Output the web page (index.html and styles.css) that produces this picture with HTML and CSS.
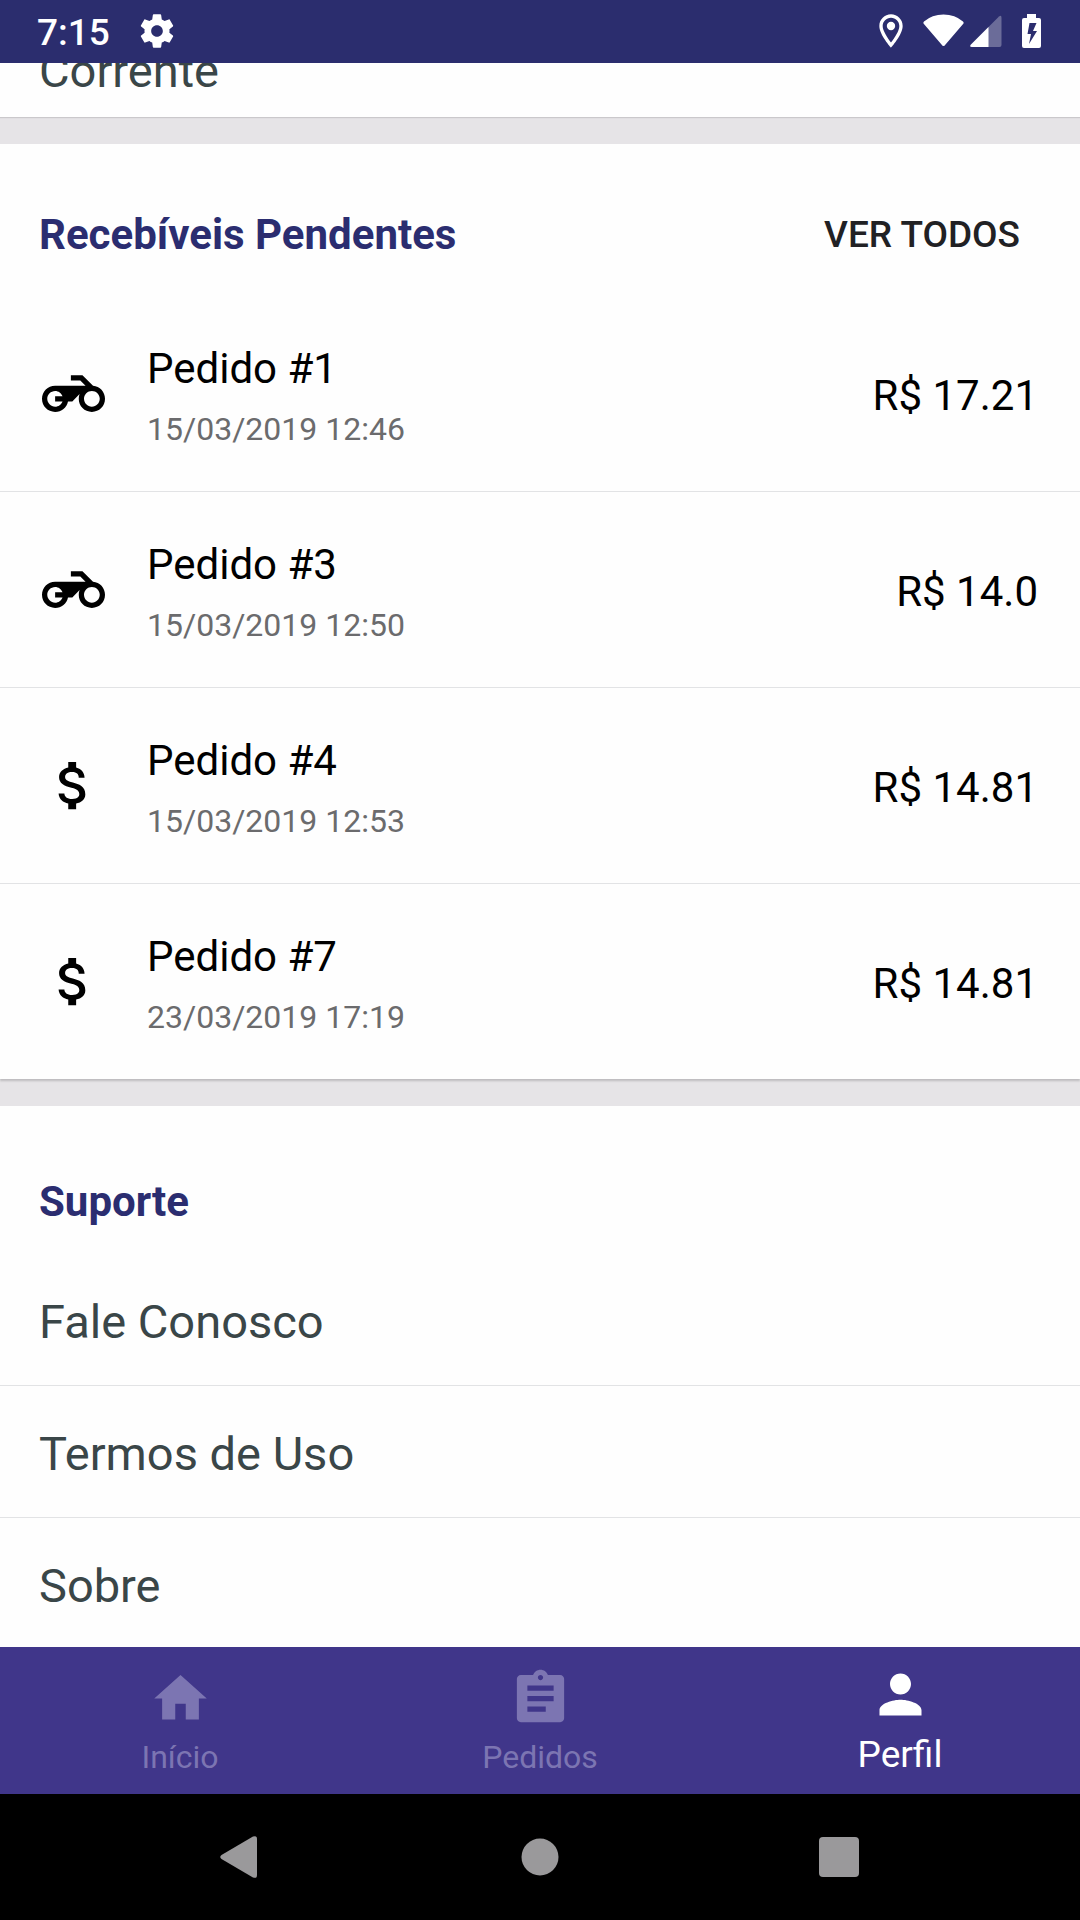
FILE: index.html
```html
<!DOCTYPE html>
<html lang="pt-BR">
<head>
  <meta charset="utf-8">
  <meta name="viewport" content="width=device-width, initial-scale=1">
  <title>Perfil</title>
  <link rel="stylesheet" href="styles.css">
</head>
<body>
  <svg class="sprite" aria-hidden="true">
    <symbol id="motorcycle" viewBox="0 0 24 24"><path d="M19.44 9.03L15.41 5H11v2h3.59l2 2H5c-2.8 0-5 2.2-5 5s2.2 5 5 5c2.46 0 4.45-1.69 4.9-4h1.65l2.77-2.77c-.21.54-.32 1.14-.32 1.77 0 2.8 2.2 5 5 5s5-2.2 5-5c0-2.65-1.97-4.77-4.56-4.97zM7.82 15C7.4 16.15 6.28 17 5 17c-1.63 0-3-1.37-3-3s1.37-3 3-3c1.28 0 2.4.85 2.82 2H5v2h2.82zM19 17c-1.66 0-3-1.34-3-3s1.34-3 3-3 3 1.34 3 3-1.34 3-3 3z"/></symbol>
    <symbol id="money" viewBox="0 0 24 24"><path d="M11.8 10.9c-2.27-.59-3-1.2-3-2.15 0-1.09 1.01-1.85 2.7-1.85 1.78 0 2.44.85 2.5 2.1h2.21c-.07-1.72-1.12-3.3-3.21-3.81V3h-3v2.16c-1.94.42-3.5 1.68-3.5 3.61 0 2.31 1.91 3.46 4.7 4.13 2.5.6 3 1.48 3 2.41 0 .69-.49 1.79-2.7 1.79-2.06 0-2.87-.92-2.98-2.1h-2.2c.12 2.19 1.76 3.42 3.68 3.83V21h3v-2.15c1.95-.37 3.5-1.5 3.5-3.55 0-2.84-2.43-3.81-4.7-4.4z"/></symbol>
  </svg>

  <header class="status">
    <div class="status-side">
      <time class="clock">7:15</time>
      <svg width="34" height="34" viewBox="1.8 1.8 20.4 20.4" aria-hidden="true"><path d="M19.43 12.98c.04-.32.07-.64.07-.98s-.03-.66-.07-.98l2.11-1.65c.19-.15.24-.42.12-.64l-2-3.46c-.12-.22-.39-.3-.61-.22l-2.49 1c-.52-.4-1.08-.73-1.69-.98l-.38-2.65C14.46 2.18 14.25 2 14 2h-4c-.25 0-.46.18-.49.42l-.38 2.65c-.61.25-1.17.59-1.69.98l-2.49-1c-.23-.09-.49 0-.61.22l-2 3.46c-.13.22-.07.49.12.64l2.11 1.65c-.04.32-.07.65-.07.98s.03.66.07.98l-2.11 1.65c-.19.15-.24.42-.12.64l2 3.46c.12.22.39.3.61.22l2.49-1c.52.4 1.08.73 1.69.98l.38 2.65c.03.24.24.42.49.42h4c.25 0 .46-.18.49-.42l.38-2.65c.61-.25 1.17-.59 1.69-.98l2.49 1c.23.09.49 0 .61-.22l2-3.46c.12-.22.07-.49-.12-.64l-2.11-1.65zM12 15.5c-1.93 0-3.5-1.57-3.5-3.5s1.57-3.5 3.5-3.5 3.5 1.57 3.5 3.5-1.57 3.5-3.5 3.5z"/></svg>
    </div>
    <div class="status-side">
      <svg width="24" height="34" viewBox="4.8 1.8 14.4 20.4" aria-hidden="true"><path d="M12 2C8.13 2 5 5.13 5 9c0 5.25 7 13 7 13s7-7.75 7-13c0-3.87-3.13-7-7-7zM7 9c0-2.76 2.24-5 5-5s5 2.24 5 5c0 2.88-2.88 7.19-5 9.88C9.92 16.21 7 11.85 7 9z"/><circle cx="12" cy="9" r="2.5"/></svg>
      <div class="signals">
        <svg width="41" height="34" viewBox="0 0 41 34" aria-hidden="true"><path d="M20.500 32Q19.500 32 18.500 30.500L.5 9.500Q0 8.500 1 7.500Q9 .5 20.500 .5T40 7.500Q41 8.500 40.500 9.500L22.500 30.500Q21.500 32 20.500 32z"/></svg>
        <svg width="32" height="34" viewBox="0 0 32 34" aria-hidden="true"><path d="M2 33Q-1 33 1 30.500L29 2.500Q31.500 .5 31.500 4V31Q31.500 33 29.500 33z" opacity=".3"/><path d="M2 33Q-1 33 1 30.500L18.500 13V33z"/></svg>
      </div>
      <svg width="19" height="34" viewBox="0 0 19 34" aria-hidden="true"><path fill-rule="evenodd" d="M5 0h9v4h3q2 0 2 2v26q0 2-2 2H2q-2 0-2-2V6q0-2 2-2h3zM7.500 9L5.500 20h3.500L7 30L15 17h-4l3.500-8z"/></svg>
    </div>
  </header>

  <main class="content">
    <section class="card card-scrolled">
      <a class="link" href="#conta">Corrente</a>
    </section>

    <section class="card">
      <div class="card-head">
        <h2>Recebíveis Pendentes</h2>
        <button class="see-all" type="button">VER TODOS</button>
      </div>
      <ul class="orders">
        <li class="order">
          <svg class="icon" aria-hidden="true"><use href="#motorcycle"/></svg>
          <div class="order-text"><h3>Pedido #1</h3><p>15/03/2019 12:46</p></div>
          <span class="amount">R$ 17.21</span>
        </li>
        <li class="order">
          <svg class="icon" aria-hidden="true"><use href="#motorcycle"/></svg>
          <div class="order-text"><h3>Pedido #3</h3><p>15/03/2019 12:50</p></div>
          <span class="amount">R$ 14.0</span>
        </li>
        <li class="order">
          <svg class="icon" aria-hidden="true"><use href="#money"/></svg>
          <div class="order-text"><h3>Pedido #4</h3><p>15/03/2019 12:53</p></div>
          <span class="amount">R$ 14.81</span>
        </li>
        <li class="order">
          <svg class="icon" aria-hidden="true"><use href="#money"/></svg>
          <div class="order-text"><h3>Pedido #7</h3><p>23/03/2019 17:19</p></div>
          <span class="amount">R$ 14.81</span>
        </li>
      </ul>
    </section>

    <section class="card">
      <div class="card-head support-head"><h2>Suporte</h2></div>
      <a class="link" href="#fale-conosco">Fale Conosco</a>
      <a class="link" href="#termos">Termos de Uso</a>
      <a class="link" href="#sobre">Sobre</a>
    </section>
  </main>

  <nav class="tabs">
    <a class="tab" href="#inicio">
      <svg class="icon" viewBox="0 0 24 24" aria-hidden="true"><path d="M10 20v-6h4v6h5v-8h3L12 3 2 12h3v8z"/></svg>
      <span>Início</span>
    </a>
    <a class="tab" href="#pedidos">
      <svg class="icon" viewBox="0 0 24 24" aria-hidden="true"><path d="M19.500 3h-4.680C14.400 1.840 13.300 1 12 1c-1.300 0-2.400.84-2.820 2H4.500C3.700 3 3 3.700 3 4.500v15c0 .8.7 1.500 1.500 1.500h15c.8 0 1.500-.7 1.500-1.500v-15c0-.8-.7-1.500-1.500-1.500zM12 3c.55 0 1 .45 1 1s-.45 1-1 1-1-.45-1-1 .45-1 1-1zm2 14H7v-2h7v2zm3-4H7v-2h10v2zm0-4H7V7h10v2z"/></svg>
      <span>Pedidos</span>
    </a>
    <a class="tab tab-active" href="#perfil" aria-current="page">
      <svg class="icon" viewBox="0 0 24 24" aria-hidden="true"><path d="M12 12c2.210 0 4-1.790 4-4s-1.790-4-4-4-4 1.790-4 4 1.790 4 4 4zm0 2c-2.670 0-8 1.340-8 4v2h16v-2c0-2.660-5.330-4-8-4z"/></svg>
      <span>Perfil</span>
    </a>
  </nav>

  <div class="system-nav">
    <button type="button" aria-label="Voltar"><svg width="42" height="42" viewBox="0 0 42 42" aria-hidden="true"><path d="M1.500 19L33 .6Q37-1 37 3V39Q37 43 33 41.400L1.500 23Q-1 21 1.500 19z"/></svg></button>
    <button type="button" aria-label="Tela inicial"><svg width="42" height="42" viewBox="0 0 42 42" aria-hidden="true"><circle cx="21" cy="21" r="18.500"/></svg></button>
    <button type="button" aria-label="Recentes"><svg width="42" height="42" viewBox="0 0 42 42" aria-hidden="true"><rect x="1" y="1" width="40" height="40" rx="4"/></svg></button>
  </div>
</body>
</html>
```
FILE: styles.css
```css
* {
  box-sizing: border-box;
}

body {
  display: flex;
  flex-direction: column;
  height: 100vh;
  margin: 0;
  background: #e6e4e7;
  color: #000;
  font-family: Roboto, "Noto Sans", sans-serif;
  font-size: 42px;
  line-height: 50px;
}

h2,
h3,
p,
ul {
  margin: 0;
  padding: 0;
}

button {
  border: 0;
  background: none;
  font-family: inherit;
}

a {
  text-decoration: none;
}

svg {
  display: block;
  flex: none;
  fill: currentColor;
}

.sprite {
  position: absolute;
  width: 0;
  height: 0;
}

.icon {
  width: 63px;
  height: 63px;
}

/* Status bar */
.status {
  display: flex;
  flex: none;
  align-items: center;
  justify-content: space-between;
  padding: 7px 39px 8px 37px;
  background: #2b2d6e;
  color: #fff;
}

.status-side {
  display: flex;
  align-items: center;
  gap: 20px;
}

.status-side:first-child {
  gap: 30px;
}

.signals {
  display: flex;
  gap: 6px;
}

.clock {
  padding-top: 4px;
  font-size: 37px;
  font-weight: 500;
  line-height: 44px;
}

/* Scrolling content */
.content {
  display: flex;
  flex: 1;
  flex-direction: column;
  gap: 27px;
  min-height: 0;
  overflow: hidden;
}

.card {
  flex: none;
  background: #fefefe;
  box-shadow: 0 2px 2px rgba(0, 0, 0, 0.18);
}

/* First card, scrolled partly under the status bar */
.card-scrolled {
  margin-top: -60px;
  box-shadow: 0 1px 1px rgba(0, 0, 0, 0.12);
}

.card-scrolled .link {
  padding-bottom: 18px;
}

.card-head {
  display: flex;
  align-items: center;
  justify-content: space-between;
  padding: 66px 42px 36px 39px;
}

.support-head {
  padding: 71px 39px 27px;
}

h2 {
  color: #2b2d70;
  font-size: 42px;
  font-weight: 700;
}

.see-all {
  padding: 0 18px;
  color: #212124;
  font-size: 37px;
  font-weight: 500;
  line-height: 44px;
}

.orders {
  list-style: none;
}

.order {
  display: flex;
  align-items: center;
  gap: 42px;
  padding: 0 42px;
}

.order + .order,
.link + .link {
  border-top: 1px solid #e2e3e5;
}

.order-text {
  flex: 1;
  padding: 48px 0 43px;
}

.order h3 {
  font-size: 42px;
  font-weight: 400;
}

.order p {
  padding-top: 16px;
  color: #6b6b6d;
  font-size: 32px;
  line-height: 38px;
}

.amount {
  padding-top: 4px;
}

.link {
  display: block;
  padding: 40px 39px 35px;
  color: #3a4648;
  font-size: 47px;
  line-height: 56px;
}

/* Bottom tabs */
.tabs {
  display: flex;
  flex: none;
  align-items: flex-end;
  padding: 16px 0 17px;
  background: #40368a;
}

.tab {
  display: flex;
  flex: 1;
  flex-direction: column;
  align-items: center;
  gap: 7px;
  color: #7c75b2;
  font-size: 32px;
  line-height: 40px;
}

.tab-active {
  color: #fff;
  font-size: 37px;
  line-height: 44px;
}

/* System navigation */
.system-nav {
  display: flex;
  flex: none;
  padding: 0 92px;
  background: #000;
  color: #9a999b;
}

.system-nav button {
  display: flex;
  flex: 1;
  justify-content: center;
  padding: 42px 0;
  color: inherit;
}
```
